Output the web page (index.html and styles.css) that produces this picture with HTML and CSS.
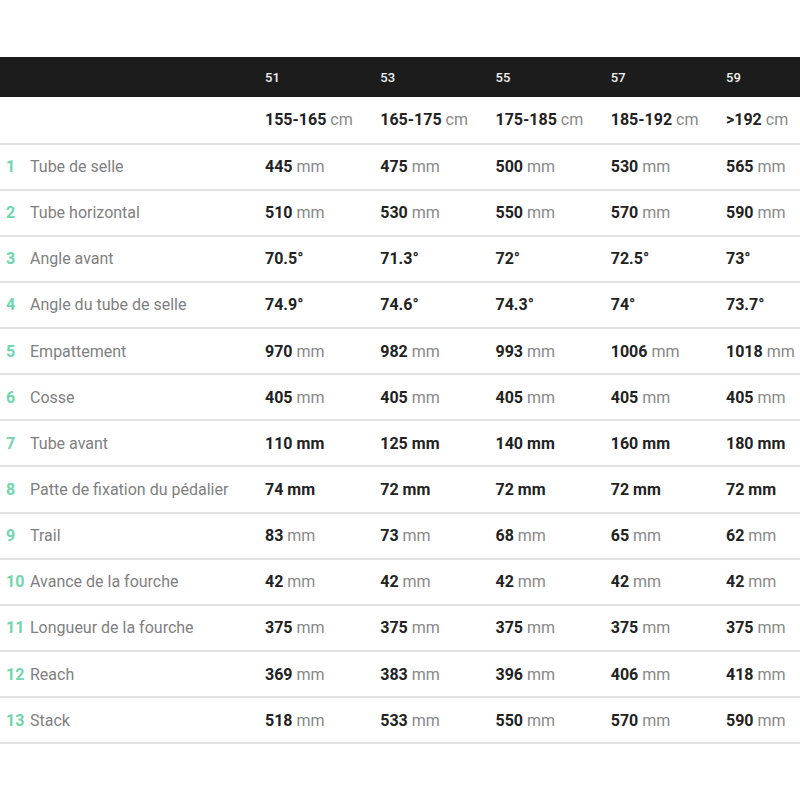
FILE: index.html
```html
<!DOCTYPE html>
<html lang="fr">
<head>
<meta charset="utf-8">
<title>Géométrie</title>
<link rel="stylesheet" href="styles.css">
</head>
<body>
<div class="geo">
  <div class="row head">
    <div class="label"></div>
    <div class="cell">51</div><div class="cell">53</div><div class="cell">55</div><div class="cell">57</div><div class="cell">59</div>
  </div>
  <div class="row sizes">
    <div class="label"></div>
    <div class="cell"><b>155-165</b> cm</div><div class="cell"><b>165-175</b> cm</div><div class="cell"><b>175-185</b> cm</div><div class="cell"><b>185-192</b> cm</div><div class="cell"><b>&gt;192</b> cm</div>
  </div>
  <div class="row">
    <div class="label"><span class="num">1</span>Tube de selle</div>
    <div class="cell"><b>445</b> mm</div><div class="cell"><b>475</b> mm</div><div class="cell"><b>500</b> mm</div><div class="cell"><b>530</b> mm</div><div class="cell"><b>565</b> mm</div>
  </div>
  <div class="row">
    <div class="label"><span class="num">2</span>Tube horizontal</div>
    <div class="cell"><b>510</b> mm</div><div class="cell"><b>530</b> mm</div><div class="cell"><b>550</b> mm</div><div class="cell"><b>570</b> mm</div><div class="cell"><b>590</b> mm</div>
  </div>
  <div class="row">
    <div class="label"><span class="num">3</span>Angle avant</div>
    <div class="cell"><b>70.5°</b></div><div class="cell"><b>71.3°</b></div><div class="cell"><b>72°</b></div><div class="cell"><b>72.5°</b></div><div class="cell"><b>73°</b></div>
  </div>
  <div class="row">
    <div class="label"><span class="num">4</span>Angle du tube de selle</div>
    <div class="cell"><b>74.9°</b></div><div class="cell"><b>74.6°</b></div><div class="cell"><b>74.3°</b></div><div class="cell"><b>74°</b></div><div class="cell"><b>73.7°</b></div>
  </div>
  <div class="row">
    <div class="label"><span class="num">5</span>Empattement</div>
    <div class="cell"><b>970</b> mm</div><div class="cell"><b>982</b> mm</div><div class="cell"><b>993</b> mm</div><div class="cell"><b>1006</b> mm</div><div class="cell"><b>1018</b> mm</div>
  </div>
  <div class="row">
    <div class="label"><span class="num">6</span>Cosse</div>
    <div class="cell"><b>405</b> mm</div><div class="cell"><b>405</b> mm</div><div class="cell"><b>405</b> mm</div><div class="cell"><b>405</b> mm</div><div class="cell"><b>405</b> mm</div>
  </div>
  <div class="row">
    <div class="label"><span class="num">7</span>Tube avant</div>
    <div class="cell"><b>110 mm</b></div><div class="cell"><b>125 mm</b></div><div class="cell"><b>140 mm</b></div><div class="cell"><b>160 mm</b></div><div class="cell"><b>180 mm</b></div>
  </div>
  <div class="row">
    <div class="label"><span class="num">8</span>Patte de fixation du pédalier</div>
    <div class="cell"><b>74 mm</b></div><div class="cell"><b>72 mm</b></div><div class="cell"><b>72 mm</b></div><div class="cell"><b>72 mm</b></div><div class="cell"><b>72 mm</b></div>
  </div>
  <div class="row">
    <div class="label"><span class="num">9</span>Trail</div>
    <div class="cell"><b>83</b> mm</div><div class="cell"><b>73</b> mm</div><div class="cell"><b>68</b> mm</div><div class="cell"><b>65</b> mm</div><div class="cell"><b>62</b> mm</div>
  </div>
  <div class="row">
    <div class="label"><span class="num">10</span>Avance de la fourche</div>
    <div class="cell"><b>42</b> mm</div><div class="cell"><b>42</b> mm</div><div class="cell"><b>42</b> mm</div><div class="cell"><b>42</b> mm</div><div class="cell"><b>42</b> mm</div>
  </div>
  <div class="row">
    <div class="label"><span class="num">11</span>Longueur de la fourche</div>
    <div class="cell"><b>375</b> mm</div><div class="cell"><b>375</b> mm</div><div class="cell"><b>375</b> mm</div><div class="cell"><b>375</b> mm</div><div class="cell"><b>375</b> mm</div>
  </div>
  <div class="row">
    <div class="label"><span class="num">12</span>Reach</div>
    <div class="cell"><b>369</b> mm</div><div class="cell"><b>383</b> mm</div><div class="cell"><b>396</b> mm</div><div class="cell"><b>406</b> mm</div><div class="cell"><b>418</b> mm</div>
  </div>
  <div class="row">
    <div class="label"><span class="num">13</span>Stack</div>
    <div class="cell"><b>518</b> mm</div><div class="cell"><b>533</b> mm</div><div class="cell"><b>550</b> mm</div><div class="cell"><b>570</b> mm</div><div class="cell"><b>590</b> mm</div>
  </div>
</div>
</body>
</html>
```

FILE: styles.css
```css
html, body {
  margin: 0;
  padding: 0;
  background: #fff;
}
body {
  font-family: Roboto, "Liberation Sans", sans-serif;
  font-size: 16px;
  color: #888;
}
.geo {
  margin-top: 57px;
  width: 800px;
}
.row {
  display: grid;
  grid-template-columns: 265px repeat(4, 115.25px) 74px;
  align-items: center;
  height: 46.15px;
  box-sizing: border-box;
  border-bottom: 2px solid #e3e3e3;
}
.row.sizes {
  height: 47.5px;
}
.row.head {
  height: 40px;
  background: #1c1c1c;
  border-bottom: none;
  color: #f0f0f0;
  font-size: 13px;
  font-weight: 500;
}
.label {
  display: flex;
  align-items: center;
  color: #808080;
  padding-left: 6px;
}
.num {
  width: 24px;
  color: #6fd6ad;
  font-weight: 700;
}
.cell {
  white-space: nowrap;
}
.cell b {
  color: #222;
  font-weight: 700;
}
```
